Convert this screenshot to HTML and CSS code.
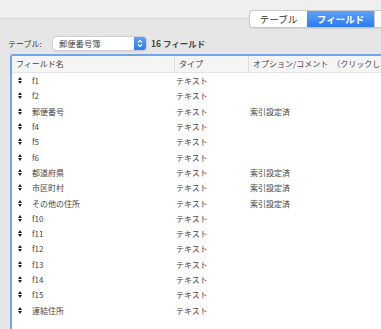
FILE: index.html
```html
<!DOCTYPE html>
<html lang="ja">
<head>
    <meta charset="UTF-8">
    <title>フィールド</title>
    <link rel="stylesheet" href="styles.css">
</head>
<body>
    <div class="top">
        <div class="tabs">
            <span class="tab">テーブル</span>
            <span class="tab active">フィールド</span>
            <span class="tab rest"></span>
        </div>
    </div>

    <div class="bar">
        <span class="label">テーブル:</span>
        <div class="popup">
            <span class="popup-text">郵便番号簿</span>
            <span class="stepper">
                <svg width="6" height="9" viewBox="0 0 6 9"><path d="M1 3.5 L3 1.5 L5 3.5 M1 5.5 L3 7.5 L5 5.5" fill="none" stroke="#fff" stroke-width="1.1"/></svg>
            </span>
        </div>
        <span class="count">16 フィールド</span>
    </div>

    <div class="table">
        <div class="head">
            <div class="col c1">フィールド名</div>
            <div class="col c2">タイプ</div>
            <div class="col c3">オプション/コメント　（クリックし</div>
        </div>
        <div class="rows">
            <div class="row"><span class="grip"><svg width="4" height="7" viewBox="0 0 4 7"><path d="M0 3 L2 0 L4 3 Z M0 4 L2 7 L4 4 Z" fill="#222"/></svg></span><span class="c1">f1</span><span class="c2">テキスト</span><span class="c3"></span></div>
            <div class="row"><span class="grip"><svg width="4" height="7" viewBox="0 0 4 7"><path d="M0 3 L2 0 L4 3 Z M0 4 L2 7 L4 4 Z" fill="#222"/></svg></span><span class="c1">f2</span><span class="c2">テキスト</span><span class="c3"></span></div>
            <div class="row"><span class="grip"><svg width="4" height="7" viewBox="0 0 4 7"><path d="M0 3 L2 0 L4 3 Z M0 4 L2 7 L4 4 Z" fill="#222"/></svg></span><span class="c1">郵便番号</span><span class="c2">テキスト</span><span class="c3">索引設定済</span></div>
            <div class="row"><span class="grip"><svg width="4" height="7" viewBox="0 0 4 7"><path d="M0 3 L2 0 L4 3 Z M0 4 L2 7 L4 4 Z" fill="#222"/></svg></span><span class="c1">f4</span><span class="c2">テキスト</span><span class="c3"></span></div>
            <div class="row"><span class="grip"><svg width="4" height="7" viewBox="0 0 4 7"><path d="M0 3 L2 0 L4 3 Z M0 4 L2 7 L4 4 Z" fill="#222"/></svg></span><span class="c1">f5</span><span class="c2">テキスト</span><span class="c3"></span></div>
            <div class="row"><span class="grip"><svg width="4" height="7" viewBox="0 0 4 7"><path d="M0 3 L2 0 L4 3 Z M0 4 L2 7 L4 4 Z" fill="#222"/></svg></span><span class="c1">f6</span><span class="c2">テキスト</span><span class="c3"></span></div>
            <div class="row"><span class="grip"><svg width="4" height="7" viewBox="0 0 4 7"><path d="M0 3 L2 0 L4 3 Z M0 4 L2 7 L4 4 Z" fill="#222"/></svg></span><span class="c1">都道府県</span><span class="c2">テキスト</span><span class="c3">索引設定済</span></div>
            <div class="row"><span class="grip"><svg width="4" height="7" viewBox="0 0 4 7"><path d="M0 3 L2 0 L4 3 Z M0 4 L2 7 L4 4 Z" fill="#222"/></svg></span><span class="c1">市区町村</span><span class="c2">テキスト</span><span class="c3">索引設定済</span></div>
            <div class="row"><span class="grip"><svg width="4" height="7" viewBox="0 0 4 7"><path d="M0 3 L2 0 L4 3 Z M0 4 L2 7 L4 4 Z" fill="#222"/></svg></span><span class="c1">その他の住所</span><span class="c2">テキスト</span><span class="c3">索引設定済</span></div>
            <div class="row"><span class="grip"><svg width="4" height="7" viewBox="0 0 4 7"><path d="M0 3 L2 0 L4 3 Z M0 4 L2 7 L4 4 Z" fill="#222"/></svg></span><span class="c1">f10</span><span class="c2">テキスト</span><span class="c3"></span></div>
            <div class="row"><span class="grip"><svg width="4" height="7" viewBox="0 0 4 7"><path d="M0 3 L2 0 L4 3 Z M0 4 L2 7 L4 4 Z" fill="#222"/></svg></span><span class="c1">f11</span><span class="c2">テキスト</span><span class="c3"></span></div>
            <div class="row"><span class="grip"><svg width="4" height="7" viewBox="0 0 4 7"><path d="M0 3 L2 0 L4 3 Z M0 4 L2 7 L4 4 Z" fill="#222"/></svg></span><span class="c1">f12</span><span class="c2">テキスト</span><span class="c3"></span></div>
            <div class="row"><span class="grip"><svg width="4" height="7" viewBox="0 0 4 7"><path d="M0 3 L2 0 L4 3 Z M0 4 L2 7 L4 4 Z" fill="#222"/></svg></span><span class="c1">f13</span><span class="c2">テキスト</span><span class="c3"></span></div>
            <div class="row"><span class="grip"><svg width="4" height="7" viewBox="0 0 4 7"><path d="M0 3 L2 0 L4 3 Z M0 4 L2 7 L4 4 Z" fill="#222"/></svg></span><span class="c1">f14</span><span class="c2">テキスト</span><span class="c3"></span></div>
            <div class="row"><span class="grip"><svg width="4" height="7" viewBox="0 0 4 7"><path d="M0 3 L2 0 L4 3 Z M0 4 L2 7 L4 4 Z" fill="#222"/></svg></span><span class="c1">f15</span><span class="c2">テキスト</span><span class="c3"></span></div>
            <div class="row"><span class="grip"><svg width="4" height="7" viewBox="0 0 4 7"><path d="M0 3 L2 0 L4 3 Z M0 4 L2 7 L4 4 Z" fill="#222"/></svg></span><span class="c1">連結住所</span><span class="c2">テキスト</span><span class="c3"></span></div>
        </div>
    </div>
</body>
</html>
```

FILE: styles.css
```css
html, body {
    height: 100%;
    overflow: hidden;
}
body {
    margin: 0;
    font-family: "Noto Sans CJK JP", "Noto Sans", sans-serif;
    font-size: 8px;
    color: #444;
    background: linear-gradient(#efefef 0, #efefef 18px, #d9d9d9 18px, #d9d9d9 19px, #e6e6e6 19px);
}

/* tab switcher */
.top {
    display: flex;
    justify-content: flex-end;
    padding-top: 10px;
    height: 17px;
}
.tabs {
    display: flex;
    height: 16px;
    border: 1px solid #c8c8c8;
    border-right: none;
    border-radius: 4px 0 0 4px;
    background: #fff;
    box-shadow: 0 1px 1px rgba(0,0,0,0.08);
    margin-right: -4px;
}
.tab {
    flex: none;
    width: 57px;
    line-height: 16px;
    text-align: center;
    font-size: 9.5px;
    color: #333;
}
.tab.active {
    width: 67px;
    background: linear-gradient(#5ea1f8, #2c7bf3);
    color: #fff;
    font-weight: bold;
}
.tab.rest {
    width: 10px;
    border-left: 1px solid #c8c8c8;
}

/* table chooser */
.bar {
    display: flex;
    align-items: center;
    height: 16px;
    margin-top: 8px;
    padding-left: 8px;
}
.label {
    width: 44px;
    color: #333;
}
.popup {
    display: flex;
    width: 93px;
    height: 13px;
    border: 1px solid #cfcfcf;
    border-radius: 4px;
    background: #fff;
    overflow: hidden;
    box-shadow: 0 1px 1px rgba(0,0,0,0.06);
}
.popup-text {
    flex: 1;
    padding-left: 6px;
    line-height: 13px;
    font-size: 8.3px;
}
.stepper {
    width: 12px;
    display: flex;
    align-items: center;
    justify-content: center;
    background: linear-gradient(#5ea1f8, #2c7bf3);
}
.count {
    margin-left: 4px;
    font-size: 8.5px;
    font-weight: bold;
    color: #444;
}

/* field list */
.table {
    margin: 3px 0 0 10px;
    height: 400px;
    border: 2px solid #6fa5ee;
    border-right: none;
    border-radius: 3px 0 0 0;
    background: #fff;
}
.head {
    display: flex;
    height: 16px;
    background: #f5f5f5;
    border-bottom: 1px solid #e4e4e4;
    line-height: 16px;
}
.head .col {
    flex: none;
    padding-left: 4px;
    white-space: nowrap;
}
.head .c1 {
    width: 158px;
    border-right: 1px solid #dcdcdc;
}
.head .c2 {
    width: 69px;
    border-right: 1px solid #dcdcdc;
}
.row {
    display: flex;
    align-items: center;
    height: 15.3px;
}
.row span {
    flex: none;
}
.grip {
    display: flex;
    width: 20px;
    padding-left: 6px;
    box-sizing: border-box;
}
.row .c1 {
    width: 144px;
}
.row .c2 {
    width: 74px;
}
```
